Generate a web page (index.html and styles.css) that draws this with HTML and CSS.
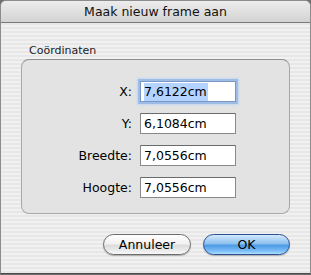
FILE: index.html
```html
<!DOCTYPE html>
<html>
<head>
<meta charset="utf-8">
<link rel="stylesheet" href="styles.css">
</head>
<body>
<div class="window">
  <div class="titlebar">Maak nieuw frame aan</div>
  <div class="content">
    <div class="group-label">Coördinaten</div>
    <div class="group">
      <div class="row">
        <span class="label">X:</span>
        <div class="field focused"><span class="sel">7,6122cm</span></div>
      </div>
      <div class="row">
        <span class="label">Y:</span>
        <div class="field">6,1084cm</div>
      </div>
      <div class="row">
        <span class="label">Breedte:</span>
        <div class="field">7,0556cm</div>
      </div>
      <div class="row">
        <span class="label">Hoogte:</span>
        <div class="field">7,0556cm</div>
      </div>
    </div>
    <div class="buttons">
      <div class="btn">Annuleer</div>
      <div class="btn default">OK</div>
    </div>
  </div>
</div>
</body>
</html>
```

FILE: styles.css
```css
html, body {
  margin: 0;
  padding: 0;
  background: #6e6e6e;
}
body {
  width: 311px;
  height: 275px;
  overflow: hidden;
  font-family: "DejaVu Sans", "Liberation Sans", sans-serif;
  font-size: 12px;
  color: #000;
}
.window {
  box-sizing: border-box;
  width: 311px;
  height: 274px;
  border: 1px solid #8c8c8c;
  border-bottom-color: #4a4a4a;
  border-radius: 6px 6px 0 0;
  overflow: hidden;
  background: repeating-linear-gradient(to bottom, #f1f1f1 0px, #f1f1f1 2px, #e7e7e7 2px, #e7e7e7 4px);
  display: flex;
  flex-direction: column;
}
.titlebar {
  height: 21px;
  border-bottom: 1px solid #7a7a7a;
  background: linear-gradient(to bottom, #ececec, #d3d3d3);
  text-align: center;
  line-height: 21px;
  font-size: 12.5px;
  color: #111;
}
.content {
  padding: 21px 20px 0 20px;
  display: flex;
  flex-direction: column;
}
.group-label {
  font-size: 11px;
  padding-left: 8px;
  height: 14px;
  line-height: 14px;
  color: #222;
}
.group {
  margin-top: 1px;
  height: 155px;
  box-sizing: border-box;
  border: 1px solid #a8a8a8;
  border-top-color: #8e8e8e;
  border-radius: 8px;
  background: #e3e3e3;
  display: flex;
  flex-direction: column;
  padding: 21px 0 0 0;
  gap: 11px;
}
.row {
  display: flex;
  align-items: center;
  height: 21px;
}
.label {
  width: 110px;
  text-align: right;
  padding-right: 8px;
  font-size: 12.5px;
}
.field {
  box-sizing: border-box;
  width: 96px;
  height: 21px;
  border: 1px solid #8a8a8a;
  border-top-color: #6a6a6a;
  background: #fff;
  padding-left: 3px;
  line-height: 19px;
  font-size: 12.5px;
}
.field.focused {
  box-shadow: 0 0 0 2px #9dbde6, 0 0 2px 3px #c3d7f0;
  border-color: #7b97c6;
}
.sel {
  background: #b5d3ff;
  padding: 1px 1px 2px 0;
}
.buttons {
  display: flex;
  justify-content: flex-end;
  gap: 12px;
  margin-top: 20px;
  padding-right: 0;
}
.btn {
  box-sizing: border-box;
  height: 21px;
  width: 88px;
  border-radius: 11px;
  border: 1px solid #6c6c6c;
  background: linear-gradient(to bottom, #ffffff 0%, #f2f2f2 45%, #dcdcdc 55%, #f6f6f6 100%);
  text-align: center;
  line-height: 19px;
  font-size: 12.5px;
  box-shadow: 0 1px 1px rgba(0,0,0,0.25);
}
.btn.default {
  width: 87px;
  border-color: #2a4f92;
  background: linear-gradient(to bottom, #d4e9fc 0%, #8dc1ef 45%, #4f9be5 55%, #7ec0f9 85%, #aee0ff 100%);
}
```
